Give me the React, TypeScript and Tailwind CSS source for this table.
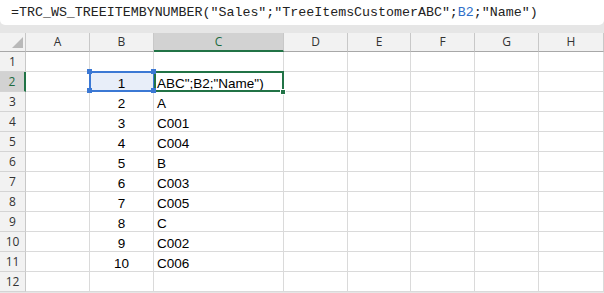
import React from "react";

const cols = ["A", "B", "C", "D", "E", "F", "G", "H"];

const bValues: Record<number, string> = {
  2: "1", 3: "2", 4: "3", 5: "4", 6: "5", 7: "6", 8: "7", 9: "8", 10: "9", 11: "10",
};

const cValues: Record<number, string> = {
  3: "A", 4: "C001", 5: "C004", 6: "B", 7: "C003", 8: "C005", 9: "C", 10: "C002", 11: "C006",
};

const rows = Array.from({ length: 12 }, (_, i) => i + 1);

const cellFont = { fontFamily: '"Liberation Sans", Arial, sans-serif' };
const headFont = { fontFamily: '"Open Sans", "Noto Sans", sans-serif' };

function Handle({ pos }: { pos: string }) {
  return <div className={`absolute w-[5px] h-[5px] bg-[#3b78d4] z-20 ${pos}`} />;
}

function Corner() {
  return (
    <div className="relative bg-[#f2f2f2] border-r border-b border-r-[#c8c8c8] border-b-[#a8a8a8]">
      <svg className="absolute left-0 top-0" width="26" height="19" viewBox="0 0 26 19">
        <polygon points="12,15 23,15 23,4" fill="#b9b9b9" />
      </svg>
    </div>
  );
}

export default function App() {
  return (
    <div className="w-[604px] h-[293px] bg-[#e6e6e6] overflow-hidden flex flex-col">
      {/* formula bar */}
      <div
        className="h-[25px] bg-white rounded-b-[5px] flex items-center pl-[11px] text-[13.3px] text-[#222] whitespace-pre"
        style={{ fontFamily: '"Liberation Mono", "DejaVu Sans Mono", monospace' }}
      >
        <span>=TRC_WS_TREEITEMBYNUMBER("Sales";"TreeItemsCustomerABC";</span>
        <span className="text-[#2f6fc9]">B2</span>
        <span>;"Name")</span>
      </div>

      {/* sheet */}
      <div className="mt-[8px] grid grid-cols-[26px_64px_64px_130px_64px_63px_64px_64px_65px] grid-rows-[19px_repeat(12,20px)] bg-white">
        <Corner />
        {cols.map((c) => {
          const sel = c === "C";
          return (
            <div
              key={c}
              style={headFont}
              className={`flex items-center justify-center text-[12px] border-r border-r-[#c8c8c8] ${
                sel
                  ? "bg-[#d2d2d2] border-b-2 border-b-[#217346] text-[#1d6b3f]"
                  : "bg-[#f2f2f2] border-b border-b-[#a8a8a8] text-[#333]"
              }`}
            >
              {c}
            </div>
          );
        })}

        {rows.map((r) => {
          const active = r === 2;
          return (
            <React.Fragment key={r}>
              <div
                style={headFont}
                className={`flex items-center justify-center text-[12px] border-b border-b-[#d4d4d4] ${
                  active
                    ? "bg-[#d2d2d2] border-r-2 border-r-[#217346] text-[#1d6b3f]"
                    : "bg-[#f2f2f2] border-r border-r-[#c8c8c8] text-[#333]"
                }`}
              >
                {r}
              </div>
              {cols.map((c) => {
                if (c === "B") {
                  return (
                    <div
                      key={c}
                      style={cellFont}
                      className={`relative border-r border-b border-[#dadada] text-center text-[13.5px] leading-[17px] pt-[3px] text-black ${
                        active ? "bg-[#e8eef9]" : ""
                      }`}
                    >
                      {bValues[r] ?? ""}
                      {active && (
                        <>
                          <div className="absolute -left-[1px] -top-[1px] w-[66px] h-[21px] border-2 border-[#3b78d4] z-10" />
                          <Handle pos="-left-[3px] -top-[3px]" />
                          <Handle pos="left-[61px] -top-[3px]" />
                          <Handle pos="-left-[3px] top-[16px]" />
                          <Handle pos="left-[61px] top-[16px]" />
                        </>
                      )}
                    </div>
                  );
                }
                if (c === "C") {
                  return (
                    <div
                      key={c}
                      style={cellFont}
                      className="relative border-r border-b border-[#dadada] text-[13.5px] leading-[17px] pt-[3px] pl-[3px] text-black whitespace-nowrap"
                    >
                      {active ? 'ABC";B2;"Name")' : cValues[r] ?? ""}
                      {active && (
                        <>
                          <div className="absolute left-0 -top-[1px] w-[130px] h-[21px] border-2 border-[#217346] z-10" />
                          <div className="absolute left-[126px] top-[17px] w-[6px] h-[6px] bg-[#217346] border border-white z-20" />
                        </>
                      )}
                    </div>
                  );
                }
                return <div key={c} className="border-r border-b border-[#dadada]" />;
              })}
            </React.Fragment>
          );
        })}
      </div>
    </div>
  );
}
